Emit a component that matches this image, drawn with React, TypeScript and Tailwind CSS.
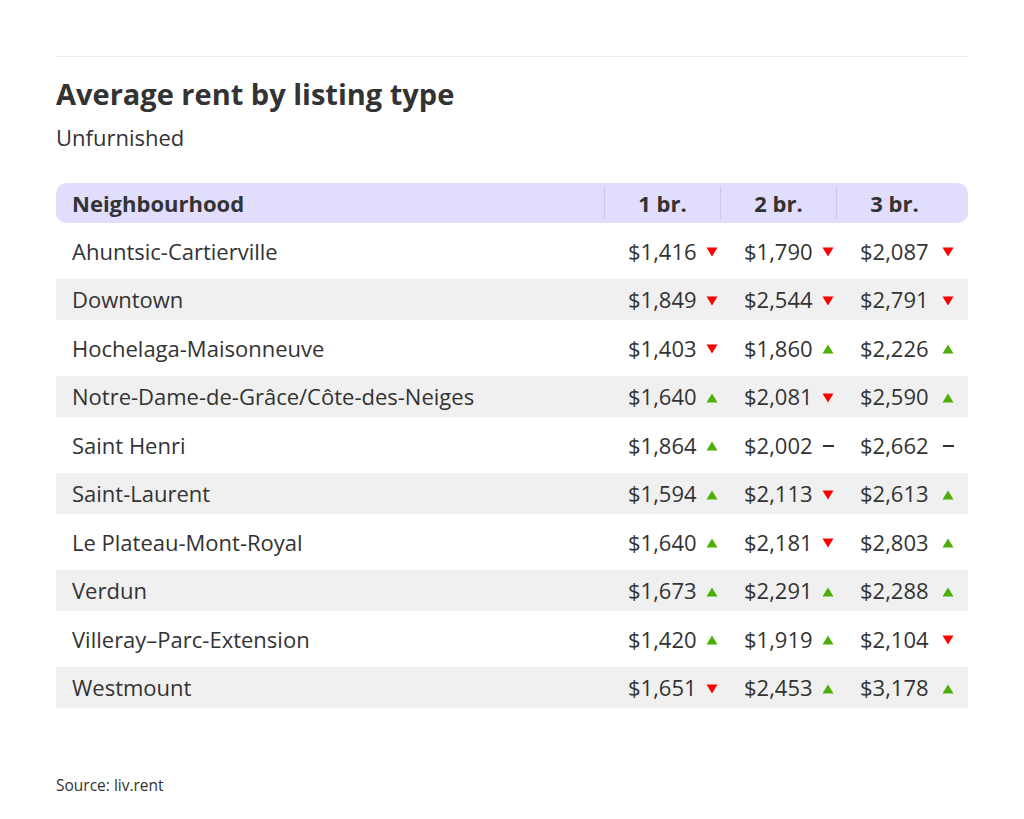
import React from 'react';

type Trend = 'up' | 'down' | 'flat';

const rows: { name: string; cells: [string, Trend][] }[] = [
  { name: 'Ahuntsic-Cartierville', cells: [['$1,416', 'down'], ['$1,790', 'down'], ['$2,087', 'down']] },
  { name: 'Downtown', cells: [['$1,849', 'down'], ['$2,544', 'down'], ['$2,791', 'down']] },
  { name: 'Hochelaga-Maisonneuve', cells: [['$1,403', 'down'], ['$1,860', 'up'], ['$2,226', 'up']] },
  { name: 'Notre-Dame-de-Grâce/Côte-des-Neiges', cells: [['$1,640', 'up'], ['$2,081', 'down'], ['$2,590', 'up']] },
  { name: 'Saint Henri', cells: [['$1,864', 'up'], ['$2,002', 'flat'], ['$2,662', 'flat']] },
  { name: 'Saint-Laurent', cells: [['$1,594', 'up'], ['$2,113', 'down'], ['$2,613', 'up']] },
  { name: 'Le Plateau-Mont-Royal', cells: [['$1,640', 'up'], ['$2,181', 'down'], ['$2,803', 'up']] },
  { name: 'Verdun', cells: [['$1,673', 'up'], ['$2,291', 'up'], ['$2,288', 'up']] },
  { name: 'Villeray–Parc-Extension', cells: [['$1,420', 'up'], ['$1,919', 'up'], ['$2,104', 'down']] },
  { name: 'Westmount', cells: [['$1,651', 'down'], ['$2,453', 'up'], ['$3,178', 'up']] },
];

function TrendIcon({ trend }: { trend: Trend }) {
  if (trend === 'flat') {
    return <span className="block h-[2.5px] w-[11px] bg-[#333333]" />;
  }
  return (
    <svg width="12" height="10" viewBox="0 0 12 10" className="block">
      {trend === 'down' ? (
        <path d="M0.5 0.5 H11.5 L6 9.5 Z" fill="#ff0000" />
      ) : (
        <path d="M0.5 9.5 H11.5 L6 0.5 Z" fill="#4caf08" />
      )}
    </svg>
  );
}

const colWidths = ['w-[116px]', 'w-[116px]', 'w-[132px]'];
const valueWidths = ['w-[78px]', 'w-[78px]', 'w-[82px]'];

export default function App() {
  return (
    <div
      className="min-h-[819px] w-full bg-white px-14 pt-14 text-[#333333]"
      style={{ fontFamily: '"Open Sans", "Noto Sans", sans-serif' }}
    >
      <div className="h-px w-full bg-[#ececec]" />

      <h1 className="mt-[17px] text-[29px] font-bold leading-[40px] text-[#333333]">Average rent by listing type</h1>
      <p className="mt-[8px] text-[22px] leading-[30px] text-[#333333]">Unfurnished</p>

      <div className="mt-[31px] flex flex-col gap-[7.5px]">
        <div className="flex h-10 items-center rounded-[10px] bg-[#e1ddfd] text-[22px] font-bold">
          <div className="flex-1 pl-4">Neighbourhood</div>
          <div className="flex h-[32px] w-[116px] items-center justify-center border-l border-[#cdc7ee]">1 br.</div>
          <div className="flex h-[32px] w-[116px] items-center justify-center border-l border-[#cdc7ee]">2 br.</div>
          <div className="flex h-[32px] w-[132px] items-center justify-center border-l border-[#cdc7ee] pr-4">3 br.</div>
        </div>

        {rows.map((row, i) => (
          <div
            key={row.name}
            className={`flex h-[41px] items-center text-[22px] ${i % 2 === 1 ? 'bg-[#f0f0f0]' : 'bg-white'}`}
          >
            <div className="flex-1 pl-4">{row.name}</div>
            {row.cells.map(([value, trend], c) => (
              <div key={c} className={`flex items-center pl-6 ${colWidths[c]}`}>
                <span className={valueWidths[c]}>{value}</span>
                <span className="flex w-[12px] items-center justify-center pt-[2px]">
                  <TrendIcon trend={trend} />
                </span>
              </div>
            ))}
          </div>
        ))}
      </div>

      <p className="mt-[67px] text-[15.5px] leading-5 text-[#333333]">Source: liv.rent</p>
    </div>
  );
}
